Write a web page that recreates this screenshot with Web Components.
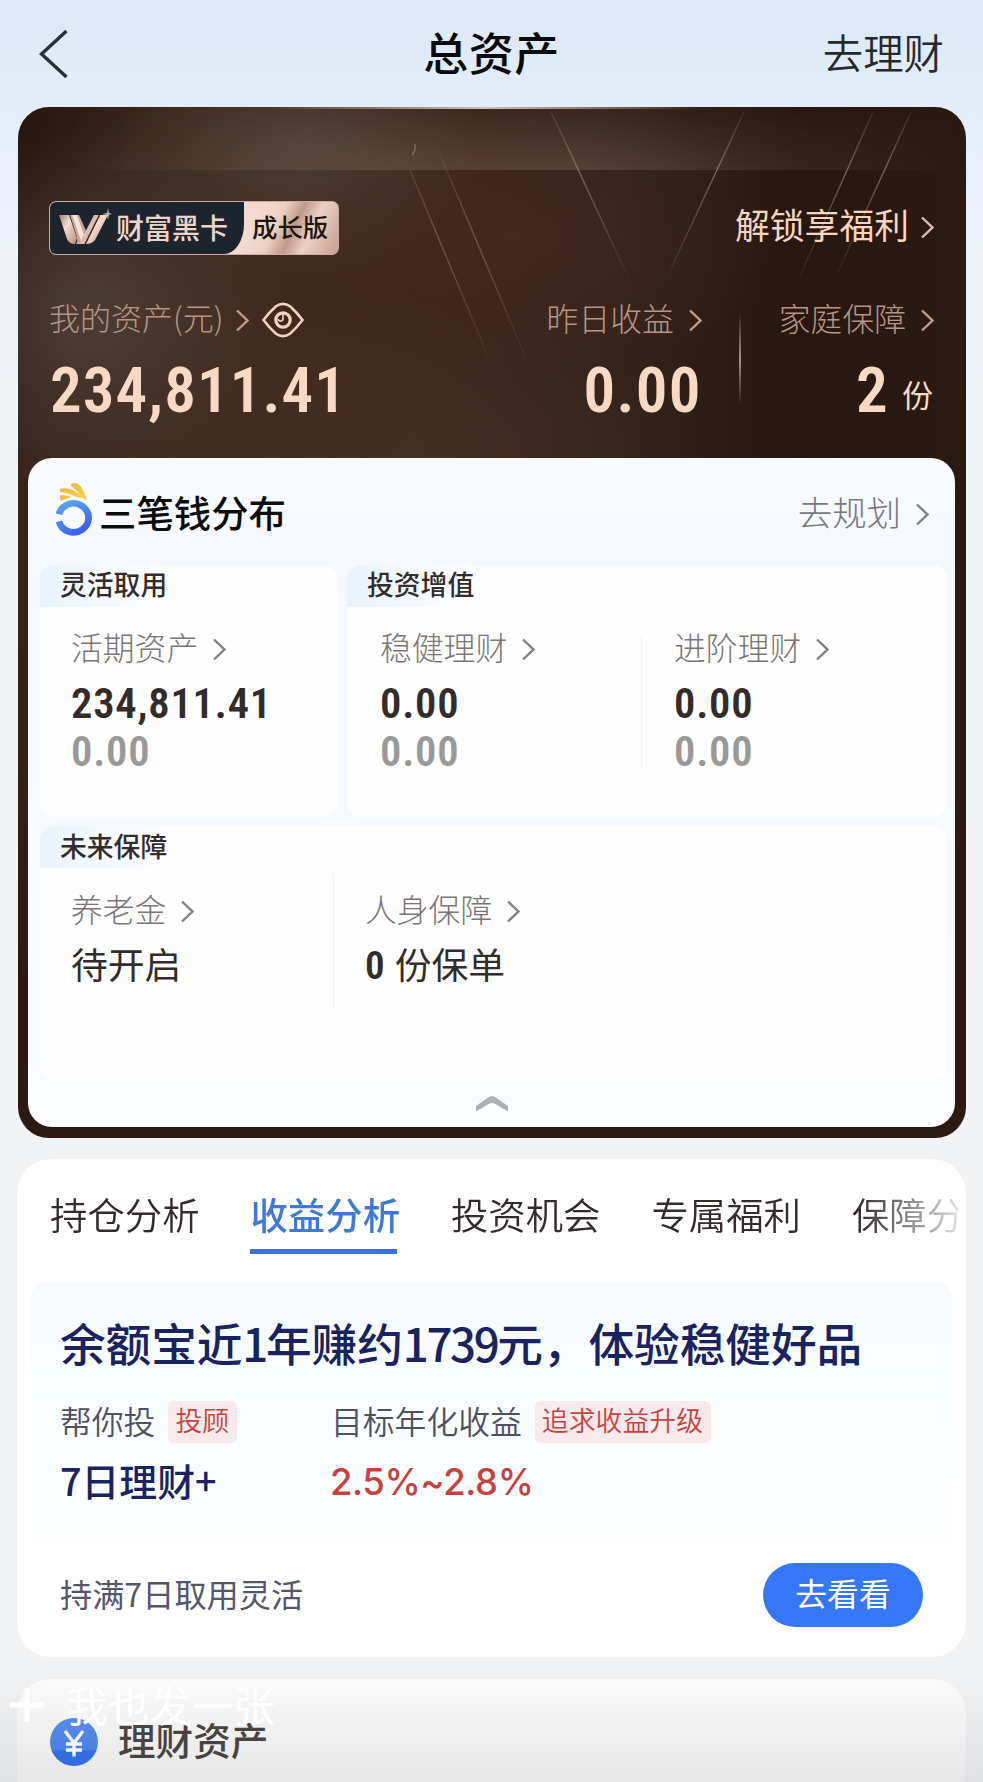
<!DOCTYPE html>
<html lang="zh-CN">
<head>
<meta charset="utf-8">
<title>总资产</title>
<style>
    body {
        margin: 0;
        background: #f2f3f5;
        font-family: "Noto Sans CJK SC", sans-serif;
        color: #332c2b;
    }
</style>
</head>
<body>
<asset-page></asset-page>

<script>
class XChevron extends HTMLElement {
    constructor() {
        super();
        this.attachShadow({ mode: 'open' });
        this.shadowRoot.innerHTML = `
        <style>
            :host { display: block; flex: none; width: 13px; height: 23px; }
            svg { display: block; }
        </style>
        <svg width="13" height="23" viewBox="0 0 13 23" fill="none" stroke="currentColor" stroke-width="2.4">
            <path d="M1 1.500L11.400 11.500L1 21.500"/>
        </svg>
        `;
    }
}
customElements.define('x-chevron', XChevron);

// label followed by a chevron
class LinkLabel extends HTMLElement {
    constructor() {
        super();
        this.attachShadow({ mode: 'open' });
        this.shadowRoot.innerHTML = `
        <style>
            :host {
                display: flex;
                align-items: center;
                height: 40px;
                font-size: 31.8px;
                font-weight: 300;
                line-height: 40px;
                white-space: nowrap;
            }
            span { margin-top: -4px; margin-right: var(--gap, 15px); }
            x-chevron { color: var(--chevron, #85807f); margin-top: 2px; }
        </style>
        <span><slot></slot></span><x-chevron></x-chevron><slot name="end"></slot>
        `;
    }
}
customElements.define('link-label', LinkLabel);

class NavBar extends HTMLElement {
    constructor() {
        super();
        this.attachShadow({ mode: 'open' });
        this.shadowRoot.innerHTML = `
        <style>
            :host {
                display: grid;
                grid-template-columns: 1fr auto 1fr;
                align-items: center;
                height: 107px;
                padding: 0 39px;
                box-sizing: border-box;
            }
            svg { display: block; }
            h1 {
                margin: -4px 0 0;
                font-size: 45px;
                font-weight: 500;
                letter-spacing: .5px;
                line-height: 60px;
                color: #0b0b0d;
            }
            a {
                justify-self: end;
                margin-top: -4px;
                font-size: 40.4px;
                font-weight: 350;
                line-height: 60px;
                color: #26282c;
            }
        </style>
        <svg width="29" height="48" viewBox="0 0 29 48" fill="none" stroke="#2c2e33" stroke-width="3.4">
            <path d="M27.500 1L2.500 24L27.500 47"/>
        </svg>
        <h1><slot></slot></h1>
        <a><slot name="action"></slot></a>
        `;
    }
}
customElements.define('nav-bar', NavBar);

class LevelBadge extends HTMLElement {
    constructor() {
        super();
        this.attachShadow({ mode: 'open' });
        this.shadowRoot.innerHTML = `
        <style>
            :host {
                display: flex;
                width: 290px;
                height: 54px;
                box-sizing: border-box;
                border: 1.5px solid #c6aca2;
                border-radius: 7px;
                overflow: hidden;
                background: linear-gradient(115deg, #f3dccf 68%, #ecd0c1 76%, #c09a8a 82%, #ecd2c4 88%, #d9b8a8 94%, #c59f8f 100%);
            }
            .level {
                display: flex;
                align-items: center;
                width: 194px;
                background: #1c242e;
                border-bottom-right-radius: 20px 30px;
                color: #ecd5c8;
                font-size: 28px;
                font-weight: 500;
                line-height: 50px;
                white-space: nowrap;
            }
            svg { flex: none; margin: 0 4px 0 8px; }
            .level span { margin-top: -3px; }
            .edition {
                margin: -1px 0 0 8px;
                font-size: 25.4px;
                font-weight: 500;
                line-height: 50px;
                color: #1d1512;
                white-space: nowrap;
            }
        </style>
        <div class="level">
            <svg width="54" height="40" viewBox="0 0 54 40">
                <defs>
                    <linearGradient id="m" x1="0" y1="0" x2="1" y2="1">
                        <stop offset="0" stop-color="#a77f70"/>
                        <stop offset=".4" stop-color="#f4ddd1"/>
                        <stop offset="1" stop-color="#b98c7b"/>
                    </linearGradient>
                </defs>
                <path d="M1 7H11L19 30L17 36Q11 36 9 31Z" fill="url(#m)"/>
                <path d="M12 7H21L29 25L24 36H18Q20 33 19 29Z" fill="#c9a595"/>
                <path d="M14 7H19L26 27L23 33Z" fill="#f6e3d9"/>
                <path d="M36 7H41L27 36H21L23 32Z" fill="#dcbcad"/>
                <path d="M42 7H50L37 32Q34 36 28 36Z" fill="url(#m)"/>
                <path d="M41.500 7L27 36" stroke="#4d2c25" stroke-width="1.3"/>
                <path d="M50 0L51 5L54 6L51 7L50 12L49 7L44 6L49 5Z" fill="#fff" opacity=".65"/>
            </svg>
            <span><slot></slot></span>
        </div>
        <div class="edition"><slot name="edition"></slot></div>
        `;
    }
}
customElements.define('level-badge', LevelBadge);

class AssetHero extends HTMLElement {
    constructor() {
        super();
        this.attachShadow({ mode: 'open' });
        this.shadowRoot.innerHTML = `
        <style>
            :host {
                display: block;
                position: relative;
                height: 351px;
                padding: 94px 32px 0 31px;
                box-sizing: border-box;
                color: #f8d9c3;
                --chevron: #c39c86;
            }
            .rays { position: absolute; left: 0; top: 0; }
            .top, .stats { position: relative; display: flex; justify-content: space-between; }
            .top { height: 54px; align-items: center; }
            .top link-label { margin-top: -4px; font-size: 34.8px; font-weight: 400; --gap: 12px; --chevron: #e0bba5; color: #f6d6bf; }
            .stats { margin-top: 44px; }
            .cell { display: flex; flex-direction: column; gap: 22px; }
            .cell link-label { color: #b89582; }
            .end { align-items: flex-end; }
            .first { flex: 1; }
            .first link-label { --gap: 12px; font-size: 31px; }
            .eye { margin-left: 13px; margin-top: 2px; }
            .num {
                font: 600 63px/60px Roboto, sans-serif;
                font-stretch: 75%;
                letter-spacing: 1.3px;
                white-space: nowrap;
            }
            .num.total { margin-left: 1px; letter-spacing: 1.1px; }
            .num small {
                position: relative;
                top: -5px;
                margin-left: 13px;
                margin-right: 1px;
                font: 400 31px/56px "Noto Sans CJK SC", sans-serif;
                letter-spacing: 0;
            }
            .line {
                width: 2px;
                height: 92px;
                margin: 14px 38px 0 37px;
                background: linear-gradient(#8a756a00, #a8958a, #8a756a00);
            }
        </style>
        <svg class="rays" width="948" height="351" viewBox="18 107 948 351" fill="none">
            <defs>
                <linearGradient id="band" x1="0" x2="1"><stop offset=".05" stop-color="#8b7365" stop-opacity="0"/><stop offset=".35" stop-color="#8b7365" stop-opacity=".3"/><stop offset=".6" stop-color="#8b7365" stop-opacity=".34"/><stop offset="1" stop-color="#8b7365" stop-opacity="0"/></linearGradient>
                <linearGradient id="fade" x1="0" y1="0" x2="0" y2="1"><stop offset="0" stop-color="#fff" stop-opacity=".1"/><stop offset="1" stop-color="#fff"/></linearGradient>
                <mask id="mk"><rect x="17" y="107" width="949" height="63" fill="url(#fade)"/></mask>
                <linearGradient id="ray" gradientUnits="userSpaceOnUse" x1="0" y1="107" x2="0" y2="285"><stop offset="0" stop-color="#a98470" stop-opacity=".1"/><stop offset=".35" stop-color="#a98470" stop-opacity=".65"/><stop offset="1" stop-color="#a98470" stop-opacity="0"/></linearGradient>
                <linearGradient id="ray2" gradientUnits="userSpaceOnUse" x1="0" y1="150" x2="0" y2="370"><stop offset="0" stop-color="#a06f5c" stop-opacity=".1"/><stop offset=".4" stop-color="#a06f5c" stop-opacity=".6"/><stop offset="1" stop-color="#a06f5c" stop-opacity="0"/></linearGradient>
                <linearGradient id="edge" x1="0" x2="1"><stop offset="0" stop-color="#dbd5d2" stop-opacity="0"/><stop offset=".5" stop-color="#dbd5d2" stop-opacity=".9"/><stop offset="1" stop-color="#dbd5d2" stop-opacity="0"/></linearGradient>
            </defs>
            <rect x="17" y="107" width="949" height="63" fill="url(#band)" mask="url(#mk)"/>
            <rect x="270" y="107" width="430" height="2" fill="url(#edge)"/>
            <path d="M551 112L570 152L634 290M744 112L668 275M873 112L799 278M911 112L838 272" stroke="url(#ray)" stroke-width="1.4"/>
            <path d="M410 170L492 366M438 150L526 358" stroke="url(#ray2)" stroke-width="1.4"/>
            <path d="M415 144Q416 151 412 155" stroke="#b7aaa3" stroke-width="1.5" opacity=".4"/>
        </svg>
        <div class="top">
            <level-badge>财富黑卡<span slot="edition">成长版</span></level-badge>
            <link-label>解锁享福利</link-label>
        </div>
        <div class="stats">
            <div class="cell first">
                <link-label>我的资产(元)<svg class="eye" slot="end" width="42" height="36" viewBox="0 0 42 36" fill="none" stroke="#f3d3be" stroke-width="2.6">
                        <path d="M1.500 18Q7.500 10 14 4.300Q21 -.5 28 4.300Q34.500 10 40.500 18Q34.500 26 28 31.700Q21 36.500 14 31.700Q7.500 26 1.500 18Z"/>
                        <circle cx="21" cy="18" r="7.200" stroke-width="3.200"/>
                        <path d="M21 12V16A2.500 2.500 0 0 1 16 17" stroke-width="1.600"/>
                    </svg></link-label>
                <div class="num total">234,811.41</div>
            </div>
            <div class="cell end">
                <link-label>昨日收益</link-label>
                <div class="num">0.00</div>
            </div>
            <div class="line"></div>
            <div class="cell end">
                <link-label>家庭保障</link-label>
                <div class="num">2<small>份</small></div>
            </div>
        </div>
        `;
    }
}
customElements.define('asset-hero', AssetHero);

class MoneyCell extends HTMLElement {
    constructor() {
        super();
        this.attachShadow({ mode: 'open' });
        this.shadowRoot.innerHTML = `
        <style>
            :host { display: block; color: #332c2b; }
            link-label { color: #7b7675; height: 40px; }
            .value, .sub {
                font: 600 42.5px/43px Roboto, sans-serif;
                font-stretch: 75%;
                letter-spacing: .8px;
                white-space: nowrap;
            }
            .value { margin-top: 14px; }
            .sub { margin-top: 5px; color: #999; }
            :host([text]) .value { font: 400 36.800px/43px "Noto Sans CJK SC", sans-serif; letter-spacing: 0; margin-top: 12px; }
            :host([text]) .sub { display: none; }
        </style>
        <link-label><slot name="label"></slot></link-label>
        <div class="value"><slot></slot></div>
        <div class="sub"><slot name="sub"></slot></div>
        `;
    }
}
customElements.define('money-cell', MoneyCell);

class PlanCard extends HTMLElement {
    constructor() {
        super();
        this.attachShadow({ mode: 'open' });
        this.shadowRoot.innerHTML = `
        <style>
            :host {
                display: block;
                border-radius: 14px;
                background: #fefeff;
                overflow: hidden;
            }
            h3 {
                width: 134px;
                height: 42px;
                margin: 0;
                padding-left: 20px;
                box-sizing: border-box;
                background: linear-gradient(90deg, #e9f3fe, #fefeff);
                font-size: 26.8px;
                font-weight: 500;
                line-height: var(--title-line, 38px);
                white-space: nowrap;
            }
            .body { display: grid; grid-template-columns: var(--cols, 1fr); padding-top: 21px; }
        </style>
        <h3><slot name="title"></slot></h3>
        <div class="body"><slot></slot></div>
        `;
    }
}
customElements.define('plan-card', PlanCard);

class PlanPanel extends HTMLElement {
    constructor() {
        super();
        this.attachShadow({ mode: 'open' });
        this.shadowRoot.innerHTML = `
        <style>
            :host {
                display: block;
                height: 669px;
                margin: 0 11px 0 10px;
                border-radius: 24px;
                background: linear-gradient(#f8fbff, #f5f8fe 12%, #f7faff 90%, #fdfeff);
                overflow: hidden;
            }
            header { display: flex; align-items: center; height: 107px; padding: 0 26px 0 27px; box-sizing: border-box; }
            header svg { margin-top: -5px; }
            h2 {
                flex: 1;
                margin: 0 0 0 7px;
                font-size: 37.4px;
                font-weight: 500;
                line-height: 60px;
                color: #0d0d10;
            }
            header link-label { margin-top: 3px; font-size: 34.4px; color: #77777c; }
            .grid {
                display: grid;
                grid-template-columns: 297px 1fr;
                grid-template-rows: 252px 254px;
                gap: 9px 10px;
                padding: 0 8px 0 12px;
            }
            .wide { grid-column: span 2; }
            money-cell { padding-left: 31px; }
            .two { --cols: 294px 1fr; }
            .three { --cols: 293px 1fr; --title-line: 40px; }
            .wide > * { transform: translateY(1px); }
            .two money-cell + money-cell {
                height: 142px;
                padding-left: 33px;
                background: linear-gradient(#f1f2f5, #f1f2f5) 0 7px / 1px 135px no-repeat;
            }
            .three money-cell + money-cell {
                height: 136px;
                margin-top: -17px;
                padding: 17px 0 0 32px;
                box-sizing: border-box;
                background: linear-gradient(#f1f2f5, #f1f2f5) 0 0 / 1px 136px no-repeat;
            }
            .two money-cell:first-of-type { padding-left: 33px; }
            b { font: 600 39px/43px Roboto, sans-serif; font-stretch: 75%; margin-right: 10px; }
            footer { display: flex; justify-content: center; padding-top: 16px; }
        </style>
        <header>
            <svg width="37" height="54" viewBox="0 0 37 56" preserveAspectRatio="none" fill="none">
                <defs>
                    <linearGradient id="b" x1="0" y1="0" x2=".6" y2="1"><stop offset="0" stop-color="#5aaaf0"/><stop offset="1" stop-color="#3f63ee"/></linearGradient>
                    <linearGradient id="y" x1="0" y1="0" x2="1" y2="1"><stop offset="0" stop-color="#efb93c"/><stop offset="1" stop-color="#f8d24c"/></linearGradient>
                </defs>
                <path d="M4 33.500A15 15 0 1 1 4 40.800" stroke="url(#b)" stroke-width="6.800"/>
                <path d="M15 3Q20 -1 24.500 3Q30 10 32 19Q31 19 28.500 17.500Q23 9 15 3Z" fill="url(#y)"/>
                <path d="M5 7Q14 5 20 9.500Q25 12 27.500 16.500Q22 16 19 14.500Q13 11.500 5 10Z" fill="url(#y)"/>
                <path d="M5 14Q12 13 17 16Q10 17 6 20Q5 18 5 14Z" fill="url(#y)"/>
            </svg>
            <h2>三笔钱分布</h2>
            <link-label>去规划</link-label>
        </header>
        <div class="grid">
            <plan-card>
                <span slot="title">灵活取用</span>
                <money-cell><span slot="label">活期资产</span>234,811.41<span slot="sub">0.00</span></money-cell>
            </plan-card>
            <plan-card class="two">
                <span slot="title">投资增值</span>
                <money-cell><span slot="label">稳健理财</span>0.00<span slot="sub">0.00</span></money-cell>
                <money-cell><span slot="label">进阶理财</span>0.00<span slot="sub">0.00</span></money-cell>
            </plan-card>
            <plan-card class="wide three">
                <span slot="title">未来保障</span>
                <money-cell text><span slot="label">养老金</span>待开启</money-cell>
                <money-cell text><span slot="label">人身保障</span><b>0</b>份保单</money-cell>
            </plan-card>
        </div>
        <footer>
            <svg width="32" height="16" viewBox="0 0 32 16" fill="#adafb3"><path d="M0 10L13 1Q16 -.3 19 1L32 10V15.500L18.500 7.500Q16 6.300 13.500 7.500L0 15.500Z"/></svg>
        </footer>
        `;
    }
}
customElements.define('plan-panel', PlanPanel);

class AssetCard extends HTMLElement {
    constructor() {
        super();
        this.attachShadow({ mode: 'open' });
        this.shadowRoot.innerHTML = `
        <style>
            :host {
                display: block;
                height: 1031px;
                margin: 0 17px 0 18px;
                border-radius: 31px;
                overflow: hidden;
                background:
                    linear-gradient(#2b191200 400px, #2b1912 900px),
                    radial-gradient(ellipse 180px 130px at 280px 40px, #54443baa, #54443b00),
                    radial-gradient(ellipse at 70px 210px, #50423acc, #50423a00 200px),
                    radial-gradient(ellipse 260px 150px at 500px 130px, #482a2099, #482a2100),
                    radial-gradient(ellipse 280px 150px at 400px 340px, #4a342988, #4a342900),
                    linear-gradient(105deg, #27150e, #33201680 10%, #33201600 20%),
                    linear-gradient(90deg, #3f281c, #3f281c 30%, #3b241a 48%, #33221a 64%, #281711 82%, #2b1a12);
                background-color: #2b1912;
            }
        </style>
        <asset-hero></asset-hero>
        <plan-panel></plan-panel>
        `;
    }
}
customElements.define('asset-card', AssetCard);

class TabBar extends HTMLElement {
    constructor() {
        super();
        this.attachShadow({ mode: 'open' });
        this.shadowRoot.innerHTML = `
        <style>
            :host {
                display: flex;
                gap: 50.900px;
                height: 96px;
                margin: 0 8px 0 33px;
                overflow: hidden;
                -webkit-mask-image: linear-gradient(90deg, #000 89%, transparent 102%);
                mask-image: linear-gradient(90deg, #000 89%, transparent 102%);
            }
            ::slotted(*) {
                flex: none;
                box-sizing: border-box;
                height: 96px;
                padding-top: 25px;
                font-size: 37.400px;
                line-height: 60px;
                white-space: nowrap;
                font-weight: 350;
            }
            ::slotted([active]) {
                color: #3f7ad6;
                font-weight: 500;
                background: linear-gradient(#3b73d3, #3b73d3) 0 90px / 147px 5px no-repeat;
            }
        </style>
        <slot></slot>
        `;
    }
}
customElements.define('tab-bar', TabBar);

class HotTag extends HTMLElement {
    constructor() {
        super();
        this.attachShadow({ mode: 'open' });
        this.shadowRoot.innerHTML = `
        <style>
            :host {
                display: block;
                height: 42px;
                padding: 0 8px 0 7px;
                border-radius: 6px;
                background: #f8e9ec;
                color: #c5433f;
                font-size: 26.900px;
                font-weight: 350;
                line-height: 37px;
            }
        </style>
        <slot></slot>
        `;
    }
}
customElements.define('hot-tag', HotTag);

class PromoBox extends HTMLElement {
    constructor() {
        super();
        this.attachShadow({ mode: 'open' });
        this.shadowRoot.innerHTML = `
        <style>
            :host {
                display: block;
                height: 355px;
                margin: 27px 14px 0;
                padding: 28px 29px 0;
                box-sizing: border-box;
                border-radius: 16px;
                background: linear-gradient(#f6fafe, #f8fdff 30%, #fafdff 55%, #fff 80%);
                color: #18235f;
                white-space: nowrap;
            }
            h2 { margin: 0; font-size: 45.700px; font-weight: 500; line-height: 64px; letter-spacing: -.1px; }
            h2 i { font-style: normal; letter-spacing: -2.400px; }
            .cols { display: grid; grid-template-columns: 271px 1fr; margin-top: 27px; }
            .name { display: flex; align-items: center; gap: 13px; height: 42px; font-size: 31.800px; font-weight: 350; color: #4e5063; }
            .name span { line-height: 42px; margin-top: -4px; }
            .value { margin-top: 13px; font-size: 37.800px; font-weight: 500; line-height: 48px; }
            .rate { margin-left: -1px; color: #c5433f; font: 500 36.500px/52px Inter, sans-serif; letter-spacing: -.4px; }
            .bottom { display: flex; justify-content: space-between; align-items: center; margin-top: 55px; }
            .bottom span { font-size: 32.200px; color: #54566e; margin-top: -5px; }
            button {
                width: 160px;
                height: 64px;
                margin: 0;
                padding: 0 0 6px;
                border: 0;
                border-radius: 32px;
                background: #3577f7;
                color: #fff;
                font: 400 31.800px/54px "Noto Sans CJK SC", sans-serif;
            }
        </style>
        <h2>余额宝近<i>1</i>年赚约<i>1739</i>元，体验稳健好品</h2>
        <div class="cols">
            <div>
                <div class="name"><span>帮你投</span><hot-tag>投顾</hot-tag></div>
                <div class="value">7日理财+</div>
            </div>
            <div>
                <div class="name"><span>目标年化收益</span><hot-tag>追求收益升级</hot-tag></div>
                <div class="value rate">2.5%~2.8%</div>
            </div>
        </div>
        <div class="bottom"><span>持满7日取用灵活</span><button>去看看</button></div>
        `;
    }
}
customElements.define('promo-box', PromoBox);

class AssetPage extends HTMLElement {
    constructor() {
        super();
        this.attachShadow({ mode: 'open' });
    }

    connectedCallback() {
        this.render();
    }

    render() {
        this.shadowRoot.innerHTML = `
        <style>
            :host {
                display: block;
                position: relative;
                height: 1782px;
                overflow: hidden;
                background: linear-gradient(#dde8f8, #e2edfa 90px, #edf1f9 240px, #f2f3f5 480px, #f2f3f4 1660px, #dfe1e5 1782px);
            }
            .analysis {
                height: 498px;
                margin: 21px 17px 0;
                border-radius: 34px;
                background: #fff;
                overflow: hidden;
            }
            .wealth {
                display: flex;
                height: 103px;
                margin: 22px 17px 0;
                padding: 39px 33px 0;
                box-sizing: border-box;
                gap: 20px;
                border-radius: 34px 34px 0 0;
                background: linear-gradient(#fafafa, #e7e7e7);
            }
            .wealth svg { flex: none; }
            .wealth span { font-size: 37.600px; font-weight: 500; line-height: 60px; margin-top: -9px; color: #4a4342; }
            .post {
                position: absolute;
                left: 10px;
                bottom: 48px;
                display: flex;
                align-items: center;
                gap: 22px;
                font-size: 41.800px;
                line-height: 60px;
                color: #fff;
            }
            .post svg { margin-top: 2px; }
        </style>
        <nav-bar>总资产<span slot="action">去理财</span></nav-bar>
        <asset-card></asset-card>
        <section class="analysis">
            <tab-bar>
                <span>持仓分析</span><span active>收益分析</span><span>投资机会</span><span>专属福利</span><span>保障分</span>
            </tab-bar>
            <promo-box></promo-box>
        </section>
        <section class="wealth">
            <svg width="48" height="48" viewBox="0 0 48 48" fill="none">
                <defs><linearGradient id="c" x1="0" y1="0" x2="0" y2="1"><stop offset="0" stop-color="#5a8ae4"/><stop offset=".67" stop-color="#4a80e4"/><stop offset=".68" stop-color="#316fe0"/><stop offset="1" stop-color="#2f6de0"/></linearGradient></defs>
                <circle cx="24" cy="24" r="24" fill="url(#c)"/>
                <path d="M15 13L24 25L33 13M24 25V38.500M16 26H32M16 32H32" stroke="#f2f4f8" stroke-width="3.400"/>
            </svg>
            <span>理财资产</span>
        </section>
        <div class="post">
            <svg width="34" height="34" viewBox="0 0 34 34" stroke="#fff" stroke-width="5"><path d="M17 0V34M0 17H34"/></svg>
            <span>我也发一张</span>
        </div>
        `;
    }
}
customElements.define('asset-page', AssetPage);
</script>
</body>
</html>
